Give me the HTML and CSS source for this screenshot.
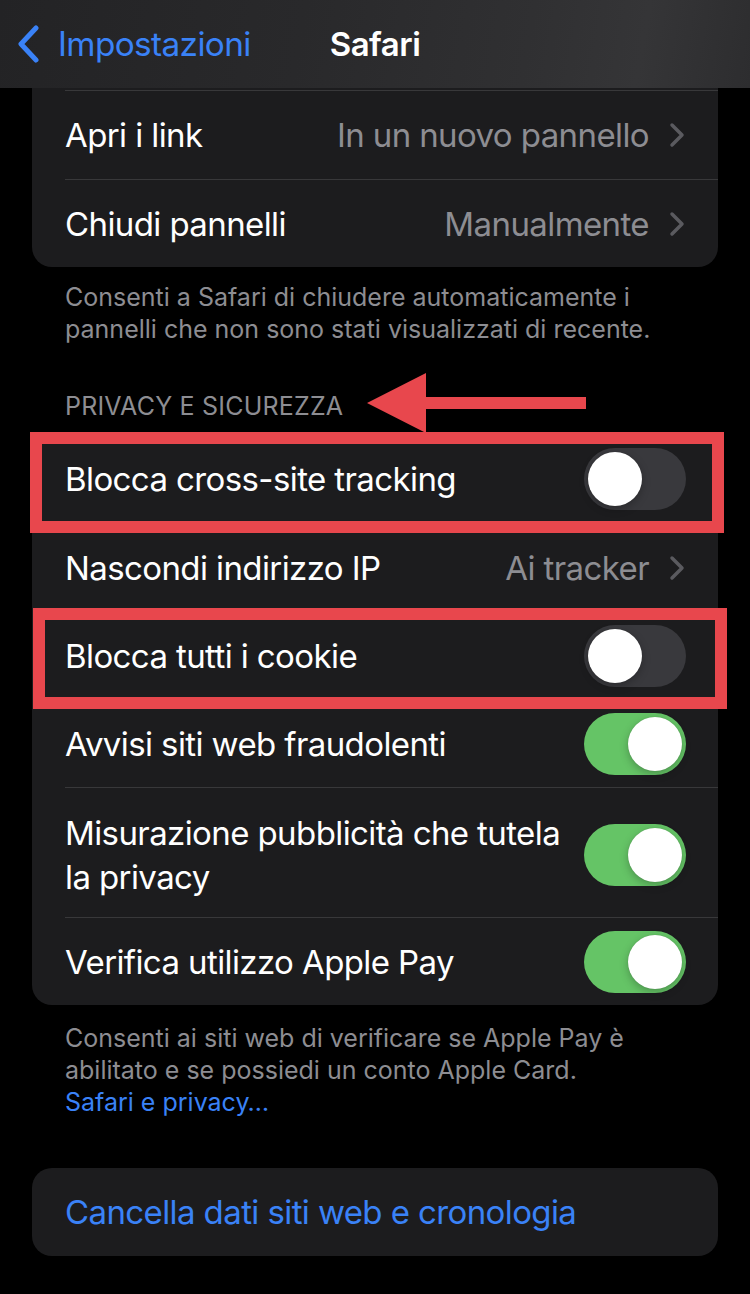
FILE: index.html
```html
<!DOCTYPE html>
<html lang="it">
<head>
<meta charset="utf-8">
<title>Safari</title>
<link rel="stylesheet" href="styles.css">
</head>
<body>
  <header class="navbar">
    <a class="back">
      <svg class="back-chevron" width="24" height="38" viewBox="0 0 24 38"><path d="M20 3 L5 19 L20 35" fill="none" stroke="#3a82f7" stroke-width="5" stroke-linecap="round" stroke-linejoin="round"/></svg>
      <span>Impostazioni</span>
    </a>
    <h1 class="title">Safari</h1>
    <span></span>
  </header>

  <main class="content">
    <section class="group group-cut">
      <div class="row">
        <span class="label">Apri i link</span>
        <span class="detail">In un nuovo pannello</span>
        <svg class="chevron" width="16" height="26" viewBox="0 0 16 26"><path d="M3 3 L13 13 L3 23" fill="none" stroke="#5a5a5f" stroke-width="3.5" stroke-linecap="round" stroke-linejoin="round"/></svg>
      </div>
      <div class="row">
        <span class="label">Chiudi pannelli</span>
        <span class="detail">Manualmente</span>
        <svg class="chevron" width="16" height="26" viewBox="0 0 16 26"><path d="M3 3 L13 13 L3 23" fill="none" stroke="#5a5a5f" stroke-width="3.5" stroke-linecap="round" stroke-linejoin="round"/></svg>
      </div>
    </section>
    <p class="footnote footnote-first">Consenti a Safari di chiudere automaticamente i pannelli che non sono stati visualizzati di recente.</p>

    <h2 class="section-title">PRIVACY E SICUREZZA</h2>
    <section class="group">
      <div class="row">
        <span class="label">Blocca cross-site tracking</span>
        <span class="switch"><span class="knob"></span></span>
      </div>
      <div class="row">
        <span class="label">Nascondi indirizzo IP</span>
        <span class="detail">Ai tracker</span>
        <svg class="chevron" width="16" height="26" viewBox="0 0 16 26"><path d="M3 3 L13 13 L3 23" fill="none" stroke="#5a5a5f" stroke-width="3.5" stroke-linecap="round" stroke-linejoin="round"/></svg>
      </div>
      <div class="row">
        <span class="label">Blocca tutti i cookie</span>
        <span class="switch"><span class="knob"></span></span>
      </div>
      <div class="row">
        <span class="label">Avvisi siti web fraudolenti</span>
        <span class="switch on"><span class="knob"></span></span>
      </div>
      <div class="row row-tall">
        <span class="label">Misurazione pubblicità che tutela la privacy</span>
        <span class="switch on"><span class="knob"></span></span>
      </div>
      <div class="row">
        <span class="label">Verifica utilizzo Apple Pay</span>
        <span class="switch on"><span class="knob"></span></span>
      </div>
    </section>
    <p class="footnote footnote-pay">Consenti ai siti web di verificare se Apple Pay è abilitato e se possiedi un conto Apple Card.<br><a class="link">Safari e privacy…</a></p>

    <section class="group group-action">
      <div class="row">
        <span class="label action">Cancella dati siti web e cronologia</span>
      </div>
    </section>
  </main>

  <!-- highlight marks drawn over the list -->
  <div class="mark mark-tracking"></div>
  <div class="mark mark-cookie"></div>
  <svg class="mark-arrow" width="222" height="62" viewBox="0 0 222 62">
    <polygon points="0,30 59,0 59,24 219,24 219,36 59,36 59,60" fill="#e8474d"/>
  </svg>
</body>
</html>
```

FILE: styles.css
```css
* {
  box-sizing: border-box;
}

html, body {
  margin: 0;
  padding: 0;
}

body {
  width: 750px;
  height: 1294px;
  overflow: hidden;
  background: #000;
  color: #fff;
  font-family: Inter, "Noto Sans", sans-serif;
  position: relative;
  -webkit-font-smoothing: antialiased;
}

/* navigation bar */
.navbar {
  height: 88px;
  display: grid;
  grid-template-columns: 1fr auto 1fr;
  align-items: center;
  background: linear-gradient(100deg, #232325 0%, #29292b 40%, #303032 70%, #353537 85%, #2d2d2f 100%);
}

.back {
  display: flex;
  align-items: center;
  padding-left: 16px;
  color: #3a82f7;
  font-size: 33.3px;
  letter-spacing: -0.6px;
}

.back-chevron {
  margin-right: 18px;
}

.title {
  margin: 0;
  font-size: 33px;
  font-weight: 600;
  letter-spacing: -0.5px;
}

/* grouped list */
.content {
  padding: 0 32px;
}

.group {
  background: #1c1c1e;
  border-radius: 20px;
  padding-left: 33px;
}

.group-cut {
  border-radius: 0 0 20px 20px;
  padding-top: 2px;
}

/* row heights include the 1px separator */
.row {
  display: flex;
  align-items: center;
  min-height: 88px;
  padding-right: 32px;
  gap: 16px;
}

.row + .row {
  border-top: 1px solid #38383a;
}

.group-cut .row:first-child {
  border-top: 1px solid #38383a;
  min-height: 89px;
}

.row-tall {
  min-height: 130px;
  padding-top: 4px;
}

.label {
  flex: 1;
  font-size: 33px;
  line-height: 44px;
  letter-spacing: -0.6px;
}

.detail {
  font-size: 33px;
  letter-spacing: -0.6px;
  color: #8d8d92;
}

.chevron {
  margin-left: 4px;
  margin-right: 1px;
}

.action {
  color: #3a82f7;
}

/* toggles */
.switch {
  flex: none;
  width: 102px;
  height: 62px;
  border-radius: 31px;
  background: #39393d;
  padding: 4px;
  display: flex;
}

.knob {
  width: 54px;
  height: 54px;
  border-radius: 50%;
  background: #fff;
  box-shadow: 0 3px 8px rgba(0, 0, 0, 0.25), 0 0 1px rgba(0, 0, 0, 0.2);
}

.switch.on {
  background: #65c466;
  justify-content: flex-end;
}

/* footnotes and headers */
.footnote {
  margin: 14px 0 0;
  padding: 0 33px;
  font-size: 25px;
  line-height: 32px;
  letter-spacing: 0;
  color: #8d8d92;
}

.footnote-pay {
  margin-top: 17px;
}

.section-title {
  margin: 45px 0 13px;
  padding: 0 33px;
  font-size: 25px;
  line-height: 32px;
  font-weight: 400;
  letter-spacing: 0.2px;
  color: #8d8d92;
}

.link {
  color: #3a82f7;
}

.group-action {
  margin-top: 50px;
}

/* red annotation marks */
.mark {
  position: absolute;
  border: 12px solid #e8474d;
  width: 694px;
  height: 101px;
}

.mark-tracking {
  left: 30px;
  top: 432px;
}

.mark-cookie {
  left: 33px;
  top: 608px;
}

.mark-arrow {
  position: absolute;
  left: 367px;
  top: 373px;
}
```
